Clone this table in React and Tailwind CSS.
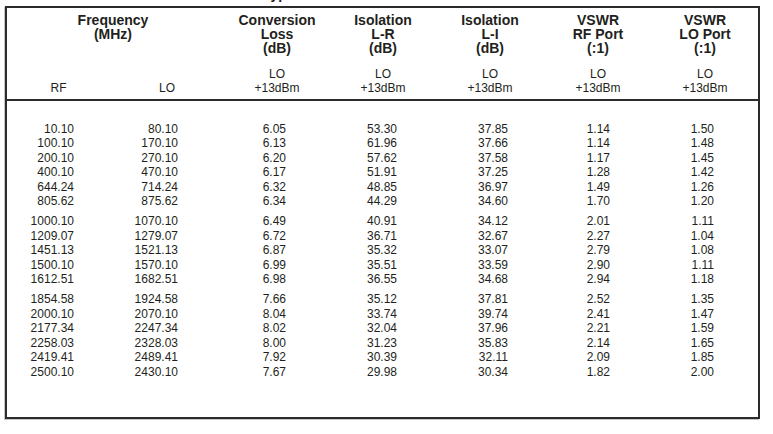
import React from "react";

const COLS = "grid grid-cols-[103px_114px_106px_106px_108px_108px_106px]";
const PR = ["pr-[36px]", "pr-[46px]", "pr-[44px]", "pr-[39px]", "pr-[36px]", "pr-[42px]", "pr-[44px]"];

const groups = [
  [
    ["10.10", "80.10", "6.05", "53.30", "37.85", "1.14", "1.50"],
    ["100.10", "170.10", "6.13", "61.96", "37.66", "1.14", "1.48"],
    ["200.10", "270.10", "6.20", "57.62", "37.58", "1.17", "1.45"],
    ["400.10", "470.10", "6.17", "51.91", "37.25", "1.28", "1.42"],
    ["644.24", "714.24", "6.32", "48.85", "36.97", "1.49", "1.26"],
    ["805.62", "875.62", "6.34", "44.29", "34.60", "1.70", "1.20"],
  ],
  [
    ["1000.10", "1070.10", "6.49", "40.91", "34.12", "2.01", "1.11"],
    ["1209.07", "1279.07", "6.72", "36.71", "32.67", "2.27", "1.04"],
    ["1451.13", "1521.13", "6.87", "35.32", "33.07", "2.79", "1.08"],
    ["1500.10", "1570.10", "6.99", "35.51", "33.59", "2.90", "1.11"],
    ["1612.51", "1682.51", "6.98", "36.55", "34.68", "2.94", "1.18"],
  ],
  [
    ["1854.58", "1924.58", "7.66", "35.12", "37.81", "2.52", "1.35"],
    ["2000.10", "2070.10", "8.04", "33.74", "39.74", "2.41", "1.47"],
    ["2177.34", "2247.34", "8.02", "32.04", "37.96", "2.21", "1.59"],
    ["2258.03", "2328.03", "8.00", "31.23", "35.83", "2.14", "1.65"],
    ["2419.41", "2489.41", "7.92", "30.39", "32.11", "2.09", "1.85"],
    ["2500.10", "2430.10", "7.67", "29.98", "30.34", "1.82", "2.00"],
  ],
];

const bold = [
  ["Conversion", "Loss", "(dB)"],
  ["Isolation", "L-R", "(dB)"],
  ["Isolation", "L-I", "(dB)"],
  ["VSWR", "RF Port", "(:1)"],
  ["VSWR", "LO Port", "(:1)"],
];

export default function App() {
  return (
    <div className="w-[773px] h-[434px] bg-white text-[#231f20] font-['Liberation_Sans',Arial,sans-serif] overflow-hidden">
      <div className="h-[6px] overflow-hidden">
        <div className="mt-[-13px] pl-[263px] text-[14px] leading-[14px] font-bold whitespace-nowrap">
          Typical Performance Data
        </div>
      </div>
      <div className="ml-[5px] w-[755px] h-[413px] border-2 border-[#2b2b2b] shadow-[-1px_1px_0_#c4c4c4]">
        {/* header */}
        <div className="pt-[5px] pb-[3.5px] border-b-2 border-[#2b2b2b]">
          <div className={COLS}>
            <div className="col-span-2 h-[42px] pr-[5px] text-center text-[14px] leading-[14px] font-bold">
              <div>Frequency</div>
              <div>(MHz)</div>
            </div>
            {bold.map((b, i) => (
              <div key={i} className="h-[42px] text-center text-[14px] leading-[14px] font-bold">
                {b.map((t, j) => (
                  <div key={j}>{t}</div>
                ))}
              </div>
            ))}
            {["RF", "LO"].map((t) => (
              <div key={t} className="pt-[11.5px] text-center text-[12px] leading-[14.7px]">
                <div>&nbsp;</div>
                <div>{t}</div>
              </div>
            ))}
            {bold.map((_, i) => (
              <div key={i} className="pt-[11.5px] text-center text-[12px] leading-[14.7px]">
                <div>LO</div>
                <div>+13dBm</div>
              </div>
            ))}
          </div>
        </div>
        {/* body */}
        <div className="pt-[20.5px] flex flex-col gap-[5.35px] text-[12px] leading-[14.5px]">
          {groups.map((g, gi) => (
            <div key={gi}>
              {g.map((row, ri) => (
                <div key={ri} className={COLS}>
                  {row.map((v, ci) => (
                    <div key={ci} className={"text-right " + PR[ci]}>
                      {v}
                    </div>
                  ))}
                </div>
              ))}
            </div>
          ))}
        </div>
      </div>
    </div>
  );
}
